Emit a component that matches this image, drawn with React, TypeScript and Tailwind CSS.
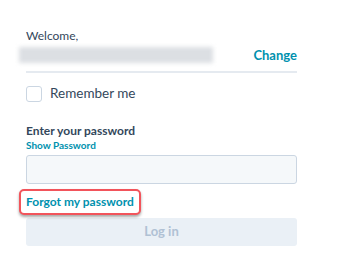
export default function App() {
  return (
    <div
      className="h-[274px] w-[350px] bg-white text-[#33475b]"
      style={{ fontFamily: "Lato, 'Open Sans', sans-serif" }}
    >
      <div className="ml-[26px] w-[271px] pt-[28px]">
        <p className="h-[16px] text-[12px] leading-[16px]">Welcome,</p>
        <div className="mt-[2px] flex h-[18px] items-center justify-between">
          <div className="-ml-[7px] h-[16px] w-[194px] bg-[#dcdfe3] blur-[2px]" />
          <a className="text-[13px] font-bold leading-[16px] text-[#0091ae]">Change</a>
        </div>
        <div className="mt-[7px] h-[2px] bg-[#e5eaf0]" />
        <label className="mt-[12px] flex h-[17px] items-center gap-[8px]">
          <span className="h-[16px] w-[16px] rounded-[3px] border border-[#cbd6e2] bg-white" />
          <span className="text-[13.5px] leading-[17px]">Remember me</span>
        </label>
        <p className="mt-[21px] text-[12px] font-bold leading-[16px]">Enter your password</p>
        <a className="block text-[10px] font-bold leading-[13px] text-[#0091ae]">
          Show Password
        </a>
        <div className="mt-[3px] h-[29px] rounded-[3px] border border-[#cbd6e2] bg-[#f5f8fa]" />
        <div className="-ml-[7px] mt-[5px] inline-flex h-[26px] items-center rounded-[5px] border-2 border-[#f2545b] bg-white px-[5px] shadow-[0_2px_3px_rgba(0,0,0,0.35)]">
          <a className="text-[12px] font-bold leading-[16px] text-[#0091ae]">Forgot my password</a>
        </div>
        <button className="mt-[3px] flex h-[28px] w-full items-center justify-center rounded-[3px] bg-[#eaf0f6] text-[13px] font-bold text-[#b0c1d4]">
          Log in
        </button>
      </div>
    </div>
  );
}
